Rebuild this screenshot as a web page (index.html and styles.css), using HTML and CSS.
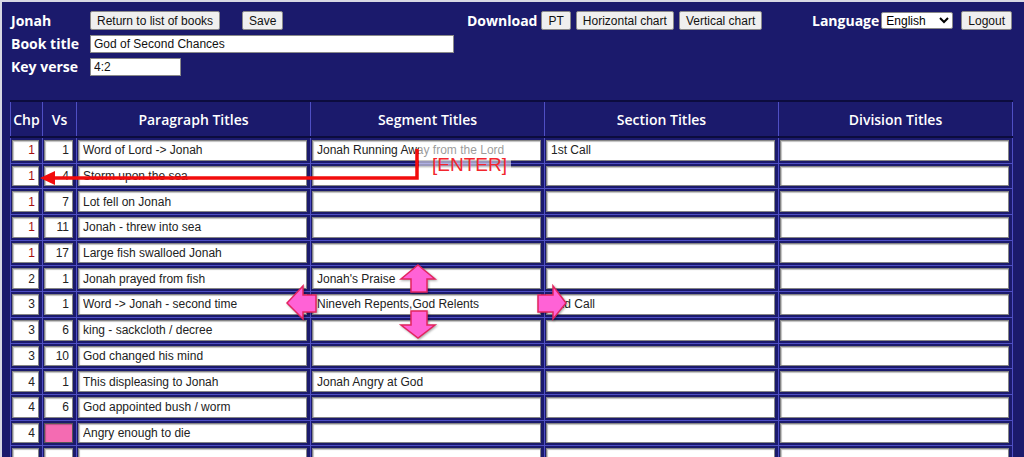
FILE: index.html
```
<!DOCTYPE html>
<html lang="en">
<head>
    <meta charset="UTF-8">
    <meta name="viewport" content="width=device-width, initial-scale=1.0">
    <title>Jonah - Titles</title>
    <link rel="stylesheet" href="styles.css">
</head>
<body>
    <div class="topbar">
        <div class="book-info">
            <div class="info-row">
                <span class="label">Jonah</span>
                <button type="button">Return to list of books</button>
                <button type="button" class="save-btn">Save</button>
            </div>
            <div class="info-row">
                <label class="label" for="bookTitle">Book title</label>
                <input type="text" id="bookTitle" class="title-input" value="God of Second Chances">
            </div>
            <div class="info-row">
                <label class="label" for="keyVerse">Key verse</label>
                <input type="text" id="keyVerse" class="verse-input" value="4:2">
            </div>
        </div>

        <div class="downloads">
            <span class="label">Download</span>
            <button type="button">PT</button>
            <button type="button">Horizontal chart</button>
            <button type="button">Vertical chart</button>
        </div>

        <div class="account">
            <span class="label">Language</span>
            <select>
                <option>English</option>
            </select>
            <button type="button">Logout</button>
        </div>
    </div>

    <table class="titles">
        <colgroup>
            <col class="col-chp">
            <col class="col-vs">
            <col class="col-title">
            <col class="col-title">
            <col class="col-title">
            <col class="col-title">
        </colgroup>
        <thead>
            <tr>
                <th>Chp</th>
                <th>Vs</th>
                <th>Paragraph Titles</th>
                <th>Segment Titles</th>
                <th>Section Titles</th>
                <th>Division Titles</th>
            </tr>
        </thead>
        <tbody>
            <tr>
                <td><input class="num chp-first" value="1"></td>
                <td><input class="num" value="1"></td>
                <td><input value="Word of Lord -> Jonah"></td>
                <td><input value="Jonah Running Away from the Lord"></td>
                <td><input value="1st Call"></td>
                <td><input value=""></td>
            </tr>
            <tr>
                <td><input class="num chp-first" value="1"></td>
                <td><input class="num" value="4"></td>
                <td><input value="Storm upon the sea"></td>
                <td><input value=""></td>
                <td><input value=""></td>
                <td><input value=""></td>
            </tr>
            <tr>
                <td><input class="num chp-first" value="1"></td>
                <td><input class="num" value="7"></td>
                <td><input value="Lot fell on Jonah"></td>
                <td><input value=""></td>
                <td><input value=""></td>
                <td><input value=""></td>
            </tr>
            <tr>
                <td><input class="num chp-first" value="1"></td>
                <td><input class="num" value="11"></td>
                <td><input value="Jonah - threw into sea"></td>
                <td><input value=""></td>
                <td><input value=""></td>
                <td><input value=""></td>
            </tr>
            <tr>
                <td><input class="num chp-first" value="1"></td>
                <td><input class="num" value="17"></td>
                <td><input value="Large fish swalloed Jonah"></td>
                <td><input value=""></td>
                <td><input value=""></td>
                <td><input value=""></td>
            </tr>
            <tr>
                <td><input class="num" value="2"></td>
                <td><input class="num" value="1"></td>
                <td><input value="Jonah prayed from fish"></td>
                <td><input value="Jonah's Praise"></td>
                <td><input value=""></td>
                <td><input value=""></td>
            </tr>
            <tr>
                <td><input class="num" value="3"></td>
                <td><input class="num" value="1"></td>
                <td><input value="Word -> Jonah - second time"></td>
                <td><input value="Nineveh Repents,God Relents"></td>
                <td><input value="2nd Call"></td>
                <td><input value=""></td>
            </tr>
            <tr>
                <td><input class="num" value="3"></td>
                <td><input class="num" value="6"></td>
                <td><input value="king - sackcloth / decree"></td>
                <td><input value=""></td>
                <td><input value=""></td>
                <td><input value=""></td>
            </tr>
            <tr>
                <td><input class="num" value="3"></td>
                <td><input class="num" value="10"></td>
                <td><input value="God changed his mind"></td>
                <td><input value=""></td>
                <td><input value=""></td>
                <td><input value=""></td>
            </tr>
            <tr>
                <td><input class="num" value="4"></td>
                <td><input class="num" value="1"></td>
                <td><input value="This displeasing to Jonah"></td>
                <td><input value="Jonah Angry at God"></td>
                <td><input value=""></td>
                <td><input value=""></td>
            </tr>
            <tr>
                <td><input class="num" value="4"></td>
                <td><input class="num" value="6"></td>
                <td><input value="God appointed bush / worm"></td>
                <td><input value=""></td>
                <td><input value=""></td>
                <td><input value=""></td>
            </tr>
            <tr>
                <td><input class="num" value="4"></td>
                <td><input class="num missing" value=""></td>
                <td><input value="Angry enough to die"></td>
                <td><input value=""></td>
                <td><input value=""></td>
                <td><input value=""></td>
            </tr>
            <tr>
                <td><input class="num" value=""></td>
                <td><input class="num" value=""></td>
                <td><input value=""></td>
                <td><input value=""></td>
                <td><input value=""></td>
                <td><input value=""></td>
            </tr>
        </tbody>
    </table>

    <!-- Annotation layer: enter key jump + arrow key moves -->
    <svg class="annotations" width="1024" height="457" viewBox="0 0 1024 457">
        <rect class="fade" x="419" y="143" width="92" height="28"></rect>
        <polyline class="enter-line" points="417,149 417,178 52,178"></polyline>
        <polygon class="enter-head" points="40,178 55,171 55,185"></polygon>
        <text class="enter-text" x="432" y="171">[ENTER]</text>

        <polygon class="move" points="418,265 435,279 427,279 427,292 411,292 411,279 401,279"></polygon>
        <polygon class="move" points="411,311 427,311 427,325 435,325 418,338 401,325 411,325"></polygon>
        <polygon class="move" points="287,303 303,286 303,295 316,295 316,312 303,312 303,319"></polygon>
        <polygon class="move" points="538,295 553,295 553,286 566,303 553,319 553,312 538,312"></polygon>
    </svg>
</body>
</html>
```

FILE: styles.css
```
body {
    margin: 0;
    height: 457px;
    overflow: hidden;
    background-color: #1b1a6c;
    box-shadow: inset 2px 2px 0 #d8d8e4;
    font-family: "Liberation Sans", Arial, sans-serif;
    position: relative;
}

/* ---- top bar ---- */

.topbar {
    display: flex;
    padding: 9px 12px 0 11px;
}

.book-info {
    width: 456px;
}

.info-row {
    display: flex;
    align-items: center;
    height: 23px;
}

.label {
    font-family: "Open Sans", sans-serif;
    font-weight: 700;
    font-size: 14px;
    color: white;
    white-space: nowrap;
}

.book-info .label {
    width: 79px;
}

button {
    font-family: "Liberation Sans", Arial, sans-serif;
    font-size: 12px;
    color: #111;
    background-color: #efefef;
    border: 1px solid #8a8a8a;
    border-radius: 2px;
    padding: 0 6px;
    height: 19px;
}

.save-btn {
    margin-left: 22px;
}

.info-row input {
    font-family: "Liberation Sans", Arial, sans-serif;
    font-size: 12px;
    height: 18px;
    box-sizing: border-box;
    border: 1px solid #8a8a8a;
    padding: 0 3px;
    color: #111;
}

.title-input {
    width: 364px;
}

.verse-input {
    width: 91px;
}

.downloads {
    display: flex;
    align-items: center;
    gap: 5px;
    height: 23px;
}

.downloads .label {
    margin-right: -1px;
}

.account {
    display: flex;
    align-items: center;
    height: 23px;
    margin-left: auto;
}

.account select {
    font-family: "Liberation Sans", Arial, sans-serif;
    font-size: 12px;
    width: 72px;
    height: 17px;
    margin: 0 8px 0 2px;
    padding: 0;
    border: 1px solid #8a8a8a;
    border-radius: 2px;
    background-color: white;
}

/* ---- titles table ---- */

.titles {
    margin: 22px 0 0 10px;
    width: 1003px;
    table-layout: fixed;
    border-collapse: collapse;
}

.col-chp { width: 32px; }
.col-vs { width: 34px; }
.col-title { width: 234px; }

.titles th {
    height: 34px;
    font-family: "Open Sans", sans-serif;
    font-weight: 600;
    font-size: 14px;
    color: white;
    border-top: 2px solid #0c0c3e;
    border-bottom: 2px solid #0c0c3e;
    border-left: 1px solid #4f4fc4;
    border-right: 1px solid #4f4fc4;
    padding: 0;
}

.titles td {
    border: 1px solid #4f4fc4;
    padding: 2px 3px 2px 1px;
}

.titles input {
    display: block;
    width: 100%;
    height: 20.7px;
    box-sizing: border-box;
    border: 1px solid #858585;
    box-shadow: inset 1px 1px 1px rgba(0,0,0,0.25);
    background-color: white;
    padding: 0 4px;
    font-family: "Liberation Sans", Arial, sans-serif;
    font-size: 12px;
    color: #222;
}

.titles input.num {
    text-align: right;
    padding-right: 3px;
}

.titles input.chp-first {
    color: #a30d0d;
}

.titles input.missing {
    background-color: #f46bb2;
    border-color: #555;
}

/* ---- annotations ---- */

.annotations {
    position: absolute;
    top: 0;
    left: 0;
    pointer-events: none;
}

.fade {
    fill: white;
    opacity: 0.55;
}

.enter-line {
    fill: none;
    stroke: #f20c0c;
    stroke-width: 3.5;
}

.enter-head {
    fill: #f20c0c;
}

.enter-text {
    font-family: "Liberation Sans", Arial, sans-serif;
    font-size: 19px;
    fill: #f2262d;
}

.move {
    fill: #ff62d6;
    stroke: #e3245f;
    stroke-width: 1.5;
    filter: drop-shadow(1px 1px 1px rgba(0,0,0,0.35));
}
```
